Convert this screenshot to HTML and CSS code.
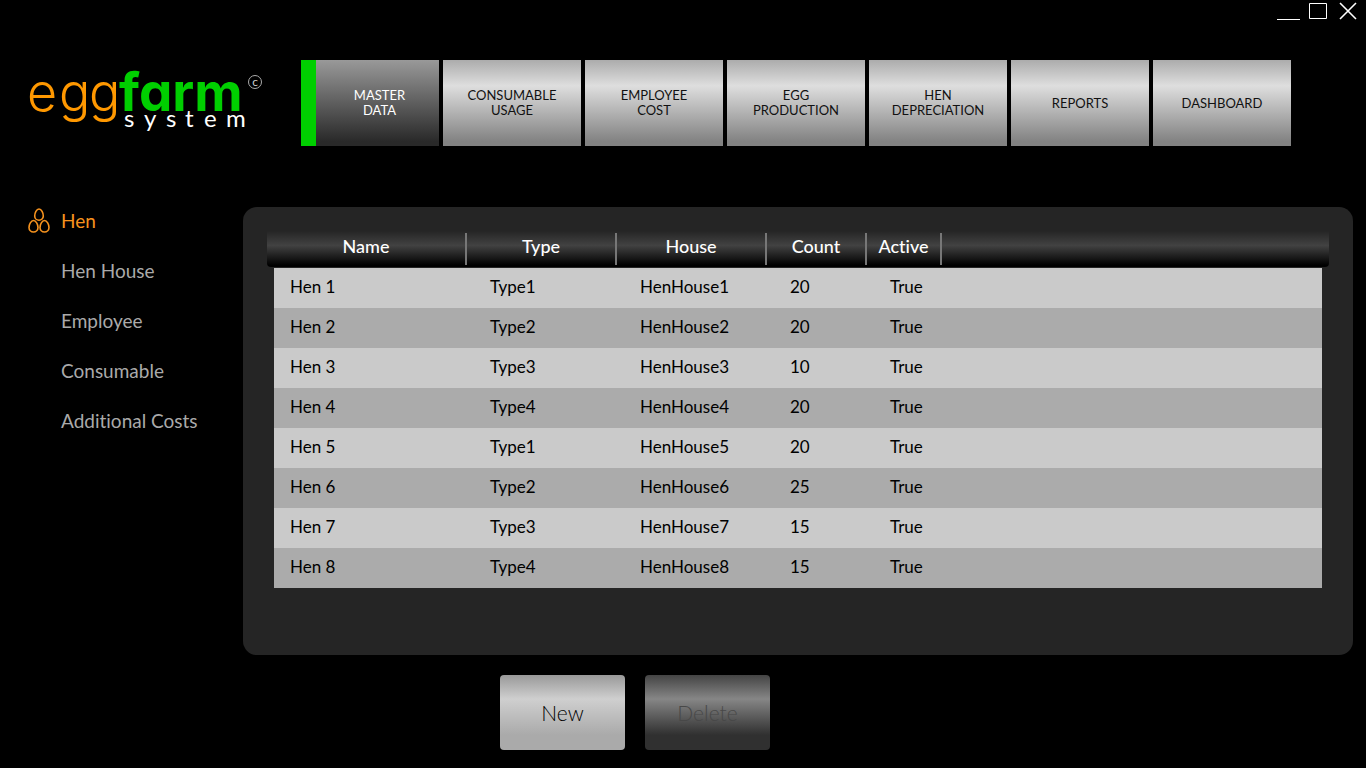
FILE: index.html
```html
<!DOCTYPE html>
<html lang="en">
<head>
<meta charset="utf-8">
<title>eggfarm system</title>
<link rel="stylesheet" href="styles.css">
</head>
<body>
<div class="window-controls">
  <button type="button" class="control" aria-label="Minimize"><svg width="24" height="22" viewBox="0 0 24 22"><path d="M0 19.500H23"/></svg></button>
  <button type="button" class="control" aria-label="Maximize"><svg width="22" height="22" viewBox="0 0 22 22"><path d="M0.500 3.500H17.500V18.500H0.500Z"/></svg></button>
  <button type="button" class="control" aria-label="Close"><svg width="18" height="22" viewBox="0 0 18 22"><path d="M1 3L17 19M17 3L1 19" stroke-width="1.600"/></svg></button>
</div>
<header class="header">
  <svg class="logo" width="240" height="72" viewBox="0 0 240 72" role="img" aria-label="eggfarm system">
    <text class="logo-egg" x="-3 29 59" y="45">egg</text>
    <text class="logo-farm" x="89" y="45">farm</text>
    <text class="logo-system" x="94 114 136 155 174 196" y="61">system</text>
    <circle class="logo-ring" cx="225" cy="16" r="6.500"/>
    <text class="logo-c" x="225" y="20">c</text>
  </svg>
  <nav class="tabs" aria-label="Modules">
    <button type="button" class="tab tab-active" aria-current="page">MASTER<br>DATA</button>
    <button type="button" class="tab">CONSUMABLE<br>USAGE</button>
    <button type="button" class="tab">EMPLOYEE<br>COST</button>
    <button type="button" class="tab">EGG<br>PRODUCTION</button>
    <button type="button" class="tab">HEN<br>DEPRECIATION</button>
    <button type="button" class="tab">REPORTS</button>
    <button type="button" class="tab">DASHBOARD</button>
  </nav>
</header>
<div class="body">
  <nav class="menu" aria-label="Master data">
    <a href="#hen" class="menu-item menu-active"><svg class="eggs" width="22" height="26" viewBox="0 0 22 26"><path d="M11 1C13.500 1 15.300 5 15.300 8A4.300 4.300 0 0 1 6.700 8C6.700 5 8.500 1 11 1ZM5.500 12.500C8 12.500 10 16.300 10 19.500A4.500 4.500 0 0 1 1 19.500C1 16.300 3 12.500 5.500 12.500ZM16.500 12.500C19 12.500 21 16.300 21 19.500A4.500 4.500 0 0 1 12 19.500C12 16.300 14 12.500 16.500 12.500Z"/></svg>Hen</a>
    <a href="#hen-house" class="menu-item">Hen House</a>
    <a href="#employee" class="menu-item">Employee</a>
    <a href="#consumable" class="menu-item">Consumable</a>
    <a href="#costs" class="menu-item">Additional Costs</a>
  </nav>
  <main class="main">
    <section class="panel">
      <table class="grid">
        <thead><tr><th>Name</th><th>Type</th><th>House</th><th>Count</th><th>Active</th></tr></thead>
        <tbody>
          <tr><td>Hen 1</td><td>Type1</td><td>HenHouse1</td><td>20</td><td>True</td></tr>
          <tr><td>Hen 2</td><td>Type2</td><td>HenHouse2</td><td>20</td><td>True</td></tr>
          <tr><td>Hen 3</td><td>Type3</td><td>HenHouse3</td><td>10</td><td>True</td></tr>
          <tr><td>Hen 4</td><td>Type4</td><td>HenHouse4</td><td>20</td><td>True</td></tr>
          <tr><td>Hen 5</td><td>Type1</td><td>HenHouse5</td><td>20</td><td>True</td></tr>
          <tr><td>Hen 6</td><td>Type2</td><td>HenHouse6</td><td>25</td><td>True</td></tr>
          <tr><td>Hen 7</td><td>Type3</td><td>HenHouse7</td><td>15</td><td>True</td></tr>
          <tr><td>Hen 8</td><td>Type4</td><td>HenHouse8</td><td>15</td><td>True</td></tr>
        </tbody>
      </table>
    </section>
    <div class="actions">
      <button type="button" class="action">New</button>
      <button type="button" class="action" disabled>Delete</button>
    </div>
  </main>
</div>
</body>
</html>
```
FILE: styles.css
```css
* { box-sizing: border-box; }
body {
  margin: 0;
  min-height: 100vh;
  display: flex;
  flex-direction: column;
  background: #000;
  color: #fff;
  font-family: Lato, sans-serif;
  font-variant-ligatures: none;
}
button { font-family: inherit; border: 0; padding: 0; }

.window-controls {
  display: flex;
  justify-content: flex-end;
  gap: 8px;
  padding-right: 9px;
}
.control { display: flex; background: none; }
.control svg { fill: none; stroke: #fff; }

.header {
  display: flex;
  align-items: flex-start;
  padding: 38px 75px 0 30px;
}
.logo { flex: none; margin: 6px 31px 0 0; overflow: visible; }
.logo text { font-family: Inter, sans-serif; }
.logo .logo-egg { font-size: 52px; font-weight: 300; fill: #ff9800; }
.logo .logo-farm { font-size: 53px; font-weight: 700; fill: #00cf00; font-feature-settings: "cv11"; }
.logo .logo-system { font-family: Lato, sans-serif; font-size: 24px; fill: #fff; }
.logo-ring { fill: none; stroke: #aaa; }
.logo .logo-c { font-family: Lato, sans-serif; font-size: 12px; fill: #ccc; text-anchor: middle; }

.tabs { flex: 1; display: grid; grid-template-columns: repeat(7, 1fr); gap: 4px; }
.tab {
  height: 86px;
  background: linear-gradient(#acacac, #dedede 30%, #828282 95%);
  color: #111;
  font-size: 13px;
  line-height: 15px;
}
.tab-active {
  background: linear-gradient(#999, #292929 95%);
  border-left: 15px solid #00cf00;
  padding-left: 4px;
  color: #fff;
}

.body { flex: 1; display: flex; padding: 61px 13px 18px 0; }
.menu { width: 243px; margin-top: -11px; padding-left: 28px; }
.menu-item {
  display: flex;
  align-items: center;
  height: 50px;
  padding-left: 33px;
  color: #aaa;
  font-size: 19px;
  line-height: 22px;
  text-decoration: none;
}
.menu-active { padding-left: 0; gap: 11px; color: #f7931e; }
.eggs { fill: none; stroke: #f7931e; stroke-width: 1.600; }

.main { flex: 1; display: flex; flex-direction: column; gap: 20px; }
.panel { flex: 1; padding: 24px; border-radius: 14px; background: #252525; }
.grid { display: block; font-size: 18px; line-height: 24px; }
.grid thead, .grid tbody { display: block; }
.grid tr { display: grid; grid-template-columns: 200px 150px 150px 100px 75px; }
.grid thead {
  margin-bottom: 1px;
  border-radius: 0 0 4px 4px;
  background: linear-gradient(#252525, #424242 40%, #000 95%);
}
.grid th {
  height: 36px;
  padding: 3px 2px 0 0;
  font-weight: 500;
  background: linear-gradient(#777, #777) right 0 top 2px / 2px 32px no-repeat;
}
.grid tbody { margin: 0 7px; color: #000; font-size: 17px; }
.grid tbody tr { background: #cacaca; }
.grid tbody tr:nth-child(even) { background: #ababab; }
.grid td { height: 40px; padding: 7px 16px; }

.actions { display: flex; gap: 20px; padding-left: 257px; }
.action {
  width: 125px;
  height: 75px;
  border-radius: 4px;
  background: linear-gradient(#999, #cfcfcf 32%, #aaa 80%);
  color: #000;
  font-size: 21px;
  font-weight: 300;
}
.action:disabled { background: linear-gradient(#444, #868686 32%, #303030 80%); color: #484848; }
```
